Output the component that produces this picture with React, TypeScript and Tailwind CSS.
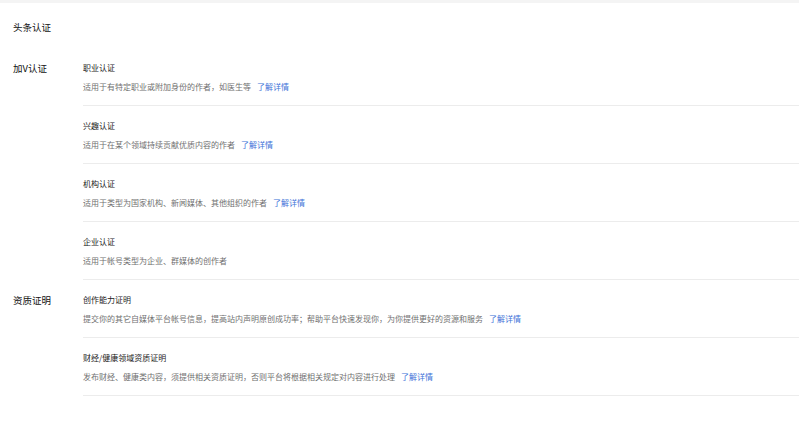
const font = "font-['PingFang_SC','Noto_Sans_CJK_SC',sans-serif]"

type Item = { title: string; desc: string; link?: boolean }

const sections: { label: string; items: Item[] }[] = [
  {
    label: "加V认证",
    items: [
      { title: "职业认证", desc: "适用于有特定职业或附加身份的作者，如医生等", link: true },
      { title: "兴趣认证", desc: "适用于在某个领域持续贡献优质内容的作者", link: true },
      { title: "机构认证", desc: "适用于类型为国家机构、新闻媒体、其他组织的作者", link: true },
      { title: "企业认证", desc: "适用于帐号类型为企业、群媒体的创作者" },
    ],
  },
  {
    label: "资质证明",
    items: [
      {
        title: "创作能力证明",
        desc: "提交你的其它自媒体平台帐号信息，提高站内声明原创成功率；帮助平台快速发现你，为你提供更好的资源和服务",
        link: true,
      },
      {
        title: "财经/健康领域资质证明",
        desc: "发布财经、健康类内容，须提供相关资质证明，否则平台将根据相关规定对内容进行处理",
        link: true,
      },
    ],
  },
]

export default function App() {
  return (
    <div className={`w-[799px] h-[428px] bg-white overflow-hidden ${font}`}>
      <div className="h-[3px] bg-[#f4f4f4]" />
      <div className="pl-[13px] mt-[17px] h-[14px] leading-[14px] text-[9.5px] text-[#111]">
        头条认证
      </div>
      <div className="mt-[14px]">
        {sections.map((s) => (
          <div key={s.label} className="flex">
            <div className="w-[83px] shrink-0 pl-[13px] pt-[14px] leading-[12px] text-[9.5px] text-[#111]">
              {s.label}
            </div>
            <div className="flex-1">
              {s.items.map((it) => (
                <div key={it.title} className="pt-[14px] pb-[12px] border-b border-[#ececec]">
                  <div className="h-[12px] leading-[12px] text-[8px] text-[#1a1a1a]">{it.title}</div>
                  <div className="mt-[7px] h-[12px] leading-[12px] text-[8px] text-[#707070] whitespace-nowrap">
                    {it.desc}
                    {it.link && <span className="ml-[6px] text-[#3d72d8]">了解详情</span>}
                  </div>
                </div>
              ))}
            </div>
          </div>
        ))}
      </div>
    </div>
  )
}
